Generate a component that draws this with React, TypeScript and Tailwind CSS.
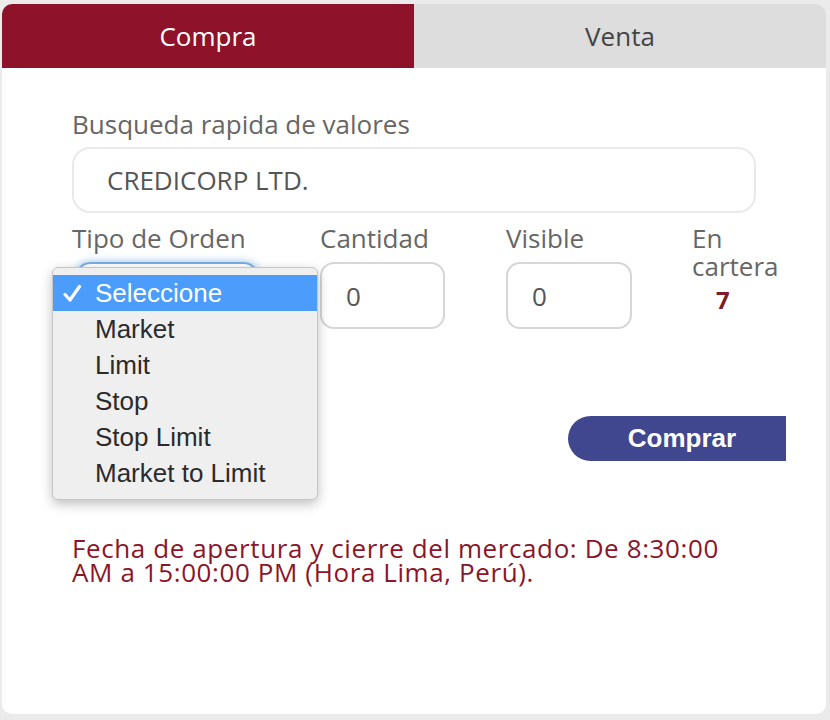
import React from 'react';

const options = ['Seleccione', 'Market', 'Limit', 'Stop', 'Stop Limit', 'Market to Limit'];

const OrderMenu: React.FC = () => (
  <div className="absolute left-[-26px] top-[3px] z-10 w-[266px] rounded-[6px] border border-[#c6c6c6] bg-[#efefef] pt-[7px] pb-[8px] shadow-[0_4px_12px_rgba(0,0,0,0.25)] [font-family:'Liberation_Sans',Arial,sans-serif]">
    {options.map((opt, i) => (
      <div
        key={opt}
        className={
          i === 0
            ? 'relative flex h-[36px] items-center bg-[#4b9cfb] pl-[42px] text-[26px] text-white'
            : 'flex h-[36px] items-center pl-[42px] text-[26px] text-[#2b2b2b]'
        }
      >
        {i === 0 && (
          <svg className="absolute left-[10px] top-[9px]" width="19" height="19" viewBox="0 0 19 19" fill="none">
            <path d="M2 10.5 L7 16 L16.5 2.5" stroke="white" strokeWidth="3.2" strokeLinecap="round" strokeLinejoin="round" />
          </svg>
        )}
        {opt}
      </div>
    ))}
  </div>
);

export default function App() {
  return (
    <div className="min-h-[720px] bg-[#ebebeb] pt-[4px] pl-[2px] pr-[4px] [font-family:'Open_Sans',sans-serif]">
      <div className="flex h-[710px] flex-col overflow-hidden rounded-[10px] bg-white">
        <div className="flex h-[64px]">
          <div className="flex w-[412px] items-center justify-center bg-[#8e1229] text-[26px] text-white">
            Compra
          </div>
          <div className="flex flex-1 items-center justify-center bg-[#dddddd] text-[26px] text-[#444]">
            Venta
          </div>
        </div>

        <div className="pl-[70px] pr-[70px] pt-[40px]">
          <div className="text-[26px] leading-[32px] text-[#666]">Busqueda rapida de valores</div>
          <div className="mt-[7px] flex h-[66px] items-center rounded-[18px] border-2 border-[#e8eaea] pl-[33px] text-[26px] text-[#555]">
            CREDICORP LTD.
          </div>

          <div className="mt-[11px] flex text-[26px] leading-[28px] text-[#666]">
            <div className="w-[248px] shrink-0">
              <div>Tipo de Orden</div>
              <div className="relative ml-[4px] mt-[10px] h-[67px] w-[182px] rounded-[14px] border-2 border-[#7aaee5] shadow-[0_0_8px_rgba(80,150,230,0.6)]">
                <OrderMenu />
              </div>
            </div>
            <div className="w-[186px] shrink-0">
              <div>Cantidad</div>
              <div className="mt-[10px] flex h-[67px] w-[125px] items-center rounded-[14px] border-2 border-[#d6d6d6] pl-[24px] text-[#555]">
                0
              </div>
            </div>
            <div className="w-[186px] shrink-0">
              <div>Visible</div>
              <div className="mt-[10px] flex h-[67px] w-[126px] items-center rounded-[14px] border-2 border-[#d6d6d6] pl-[24px] text-[#555]">
                0
              </div>
            </div>
            <div className="shrink-0">
              <div>En</div>
              <div>cartera</div>
              <div className="mt-[6px] pl-[24px] text-[24px] font-bold text-[#7b1c2c]">7</div>
            </div>
          </div>

          <div className="mt-[87px] ml-[496px] flex h-[45px] w-[218px] items-center justify-center rounded-l-full rounded-r-[3px] bg-[#41478f] pl-[10px] text-[26px] font-bold text-white [font-family:'Liberation_Sans',Arial,sans-serif]">
            Comprar
          </div>

          <p className="mt-[75px] max-w-[684px] text-[26px] leading-[24px] tracking-[0.6px] text-[#8b1529]">
            Fecha de apertura y cierre del mercado: De 8:30:00 AM a 15:00:00 PM (Hora Lima, Perú).
          </p>
        </div>
      </div>
    </div>
  );
}
